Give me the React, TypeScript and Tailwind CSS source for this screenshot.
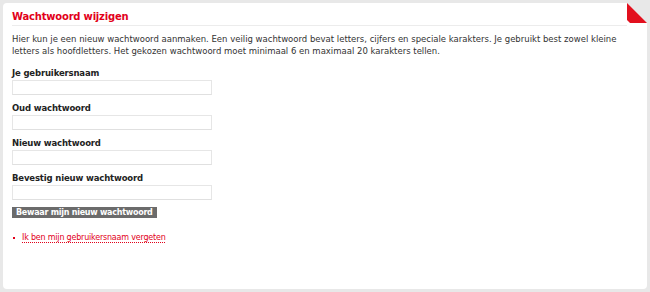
import React from 'react';

const labels = ['Je gebruikersnaam', 'Oud wachtwoord', 'Nieuw wachtwoord', 'Bevestig nieuw wachtwoord'];

function CornerFold() {
  return (
    <svg className="absolute right-0 top-0" width="20" height="20" viewBox="0 0 20 20">
      <polygon points="0,0 20,0 20,20" fill="#e8e8e8" />
      <polygon points="0,0 20,20 3,20 0,17" fill="#e2101e" />
    </svg>
  );
}

export default function App() {
  return (
    <div className="h-[292px] w-[650px] bg-[#e8e8e8] p-[3px] font-['DejaVu_Sans',sans-serif] text-[8.5px] text-[#333]">
      <div className="relative h-full rounded-[4px] bg-white pl-[9px] pr-[20px] pt-[7px]">
        <CornerFold />
        <h1 className="border-b border-[#ececec] pb-[1px] text-[10px] font-bold leading-[14px] tracking-[-0.2px] text-[#e2001a]">
          Wachtwoord wijzigen
        </h1>
        <p className="mt-[7px] leading-[12px]">
          Hier kun je een nieuw wachtwoord aanmaken. Een veilig wachtwoord bevat letters, cijfers en speciale karakters. Je gebruikt best zowel kleine letters als hoofdletters. Het gekozen wachtwoord moet minimaal 6 en maximaal 20 karakters tellen.
        </p>
        <form className="mt-[10px] flex flex-col">
          {labels.map((label, i) => (
            <label key={label} className={i === 0 ? 'block' : 'mt-[7px] block'}>
              <span className="block font-bold leading-[12px] tracking-[-0.15px] text-[#222]">{label}</span>
              <input
                type="text"
                className="mt-[1px] block h-[15px] w-[200px] border border-[#e6e6e6] border-b-[#e0e0e0] bg-white outline-none"
              />
            </label>
          ))}
          <div className="mt-[7px]">
            <button
              type="button"
              className="block bg-[#6b6b6b] px-[4px] text-[8px] font-bold leading-[11px] tracking-[-0.25px] text-white"
            >
              Bewaar mijn nieuw wachtwoord
            </button>
          </div>
        </form>
        <div className="mt-[14px] flex items-center gap-[7px]">
          <span className="ml-[1px] h-[2px] w-[2px] bg-[#e2001a]" />
          <a href="#" className="text-[8px] leading-[12px] tracking-[-0.2px] text-[#e2001a] underline decoration-dotted decoration-[#e2001a] underline-offset-2">
            Ik ben mijn gebruikersnaam vergeten
          </a>
        </div>
      </div>
    </div>
  );
}
